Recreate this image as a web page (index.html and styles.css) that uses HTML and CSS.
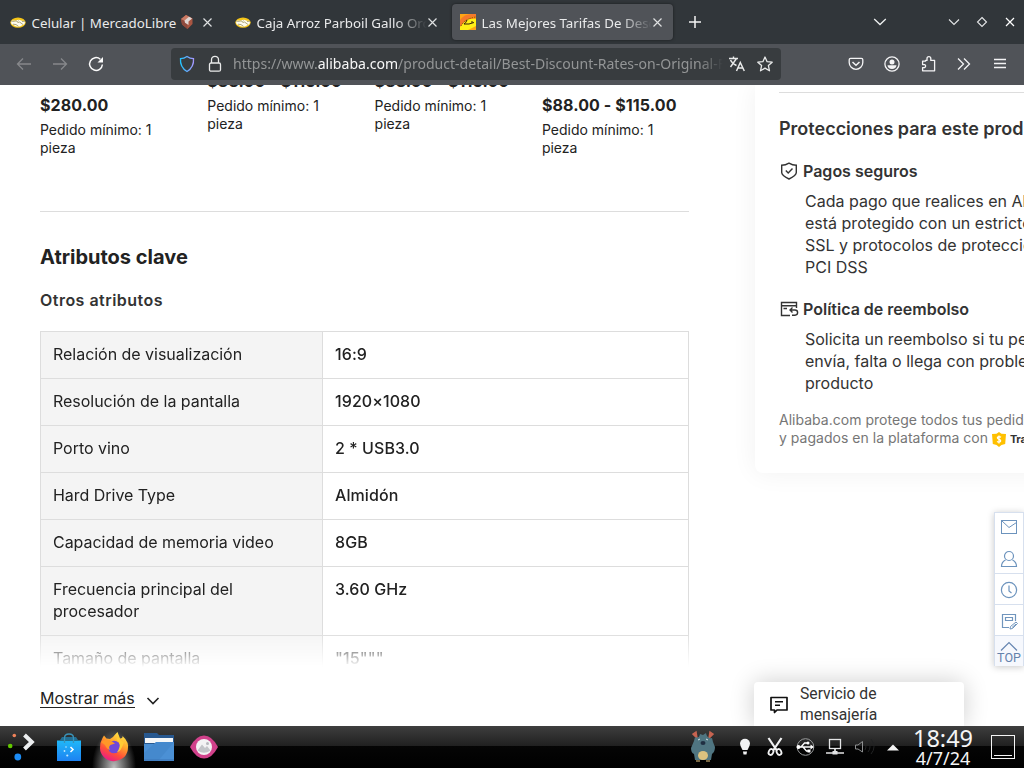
FILE: index.html
```html
<!DOCTYPE html>
<html lang="es">
<head>
<meta charset="utf-8">
<title>Las Mejores Tarifas De Descuento</title>
<link rel="stylesheet" href="styles.css">
</head>
<body>
<svg class="defs" width="0" height="0">
  <defs>
    <g id="handshake">
      <ellipse cx="8" cy="5.6" rx="7.7" ry="5.2" fill="#f5c518"/>
      <path d="M1 4.2C3 3 4 4 6 3.4C8 2.6 10 2.6 11 3.4C13 4 14 3.4 15 4.2L14.6 7C12.500 7.600 11 10 8 9.600C5 10 3.500 7.600 1.400 7Z" fill="#fdfbee"/>
      <path d="M1 4C3.500 5 5 3.600 7 4.200M8.500 3.500C6.500 5.500 8 6 9.500 5L13 7.500M15 4.200L12 4.500M3 7.200L6 7.600L8.500 9.300" fill="none" stroke="#8d8348" stroke-width=".7"/>
    </g>
    <path id="cross" d="M1.500 1.500L9.500 9.500M9.500 1.500L1.500 9.500" fill="none" stroke="#dfe1e2" stroke-width="1.150"/>
  </defs>
</svg>

<div class="tabbar">
  <div class="tab">
    <svg class="favicon" viewBox="0 0 16 11"><use href="#handshake"/></svg>
    <span class="tab-title t1">Celular | MercadoLibre</span>
    <svg class="parcel" viewBox="0 0 12 14"><path d="M0 4L5 0L11.500 3.500V9L6.500 14L1 9.500Z" fill="#a95642"/><path d="M0 4L6 7L6.500 14L1 9.500Z" fill="#8e4a3d"/><path d="M0 4L5 0L11.500 3.500L6 7Z" fill="#c97a64"/><path d="M3.500 5.500L8 1.800L11 3.500L7.500 6.500V10L4 7.800Z" fill="#dfd6d3"/></svg>
    <svg class="close" viewBox="0 0 11 11"><use href="#cross"/></svg>
  </div>
  <div class="tab">
    <svg class="favicon" viewBox="0 0 16 11"><use href="#handshake"/></svg>
    <span class="tab-title fade">Caja Arroz Parboil Gallo Oro 1kg</span>
    <svg class="close" viewBox="0 0 11 11"><use href="#cross"/></svg>
  </div>
  <div class="tab active">
    <svg class="favicon square" viewBox="0 0 16 16"><rect width="16" height="16" fill="#ffa514"/><path d="M0 16V12L7 5L16 5V12L8 16Z" fill="#ffef16"/><path d="M0 6Q4 0 12 0H16V2.500Q6 3 0 13Z" fill="#f5792a"/><path d="M1 12Q5 4.500 16 3" fill="none" stroke="#7a2f15" stroke-width=".9" stroke-dasharray="1.500 .8"/><path d="M7 6Q6 9 4 10H9L14 8.500M11 8H13" fill="none" stroke="#33200c" stroke-width="1"/></svg>
    <span class="tab-title fade">Las Mejores Tarifas De Descuento</span>
    <svg class="close" viewBox="0 0 11 11"><use href="#cross"/></svg>
  </div>
  <svg class="newtab" viewBox="0 0 14 14"><path d="M7 1V13M1 7H13" stroke="#f3f4f4" stroke-width="1.500"/></svg>
  <div class="window-controls">
    <svg class="tabs-menu" viewBox="0 0 14 10"><path d="M1.200 2L7 7.500L12.800 2" fill="none" stroke="#eef0f0" stroke-width="1.300"/></svg>
    <svg viewBox="0 0 12 12"><path d="M1 3.500L6 8.500L11 3.500" fill="none" stroke="#e4e6e7" stroke-width="1.100"/></svg>
    <svg viewBox="0 0 12 12"><path d="M6 1.500L10.500 6L6 10.500L1.500 6Z" fill="none" stroke="#e4e6e7" stroke-width="1.100"/></svg>
    <svg viewBox="0 0 12 12"><path d="M2 2L10 10M10 2L2 10" stroke="#fff" stroke-width="1.200"/></svg>
  </div>
</div>

<div class="toolbar">
  <svg class="nav" viewBox="0 0 16 16"><path d="M15 8H1.500M7 2.500L1.500 8L7 13.500" fill="none" stroke="#86888b" stroke-width="1.300"/></svg>
  <svg class="nav" viewBox="0 0 16 16"><path d="M1 8H14.500M9 2.500L14.500 8L9 13.500" fill="none" stroke="#86888b" stroke-width="1.300"/></svg>
  <svg class="nav" viewBox="0 0 16 16"><path d="M12.300 3.200A6.400 6.400 0 1 0 14.400 8.500" fill="none" stroke="#fbfbfb" stroke-width="1.500"/><path d="M15 1V6.500H9.500Z" fill="#fbfbfb"/></svg>
  <div class="urlbar">
    <svg class="ico" viewBox="0 0 16 18"><defs><linearGradient id="sh" x2="1"><stop stop-color="#20c4ff"/><stop offset="1" stop-color="#a598ff"/></linearGradient></defs><path d="M8 1.500Q11 3.600 14.500 3.700Q15.200 12 8 16.500Q.8 12 1.500 3.700Q5 3.600 8 1.500Z" fill="none" stroke="url(#sh)" stroke-width="1.300"/></svg>
    <svg class="ico" viewBox="0 0 16 18"><path d="M4.500 8V4.800A3.500 3.500 0 0 1 11.500 4.800V8" fill="none" stroke="#e9eaea" stroke-width="1.300"/><rect x="2.500" y="8" width="11" height="8.200" rx="1.500" fill="none" stroke="#e9eaea" stroke-width="1.300"/></svg>
    <span class="url">https://www.<b>alibaba.com</b>/product-detail/Best-Discount-Rates-on-Original-Factory</span>
    <svg class="ico16" viewBox="0 0 16 16"><path d="M0 2.500H9M4.500 .5V2.500M1.500 11L7.500 2.500M1.500 4Q3 7.500 7.500 9.500" fill="none" stroke="#e9eaea" stroke-width="1.400"/><path d="M7.500 15L11.300 6.500L15.300 15M9 12H14" fill="none" stroke="#e9eaea" stroke-width="1.500"/></svg>
    <svg class="ico16" viewBox="0 0 16 16"><path d="M8 1L10.100 5.700L15.200 6.200L11.400 9.600L12.500 14.800L8 12.100L3.500 14.800L4.600 9.600L.8 6.200L5.900 5.700Z" fill="none" stroke="#e9eaea" stroke-width="1.300" stroke-linejoin="round"/></svg>
  </div>
  <div class="actions">
    <svg viewBox="0 0 16 16"><path d="M1.200 3.800Q1.200 2.400 2.600 2.400H13.400Q14.800 2.400 14.800 3.800V6.500A6.800 6.800 0 0 1 1.200 6.500Z" fill="none" stroke="#f4f4f5" stroke-width="1.300"/><path d="M4.500 6L8 9.300L11.500 6" fill="none" stroke="#f4f4f5" stroke-width="1.500"/></svg>
    <svg viewBox="0 0 16 16"><circle cx="8" cy="8" r="7.100" fill="none" stroke="#f4f4f5" stroke-width="1.300"/><circle cx="8" cy="5.900" r="2.500" fill="#f4f4f5"/><path d="M3.500 9.200H12.500Q12 13 8 13Q4 13 3.500 9.200Z" fill="#f4f4f5"/></svg>
    <svg viewBox="0 0 16 16"><path d="M2 5.500V9H4A1.600 1.600 0 0 1 4 12H2V15.200H14V4.800H10.200V3A1.900 1.900 0 0 0 6.400 3V4.800H5V5.500Z" fill="none" stroke="#f4f4f5" stroke-width="1.300" stroke-linejoin="round" transform="translate(.6 -.4)"/></svg>
    <svg viewBox="0 0 16 16"><path d="M2 2.500L7.500 8L2 13.500M8 2.500L13.500 8L8 13.500" fill="none" stroke="#f4f4f5" stroke-width="1.300"/></svg>
    <svg viewBox="0 0 16 16"><path d="M2 3.500H14M2 7.500H14M2 11.500H14" stroke="#f4f4f5" stroke-width="1.300"/></svg>
  </div>
</div>

<main class="page">
  <div class="content">
    <div class="products">
      <div class="product"><div class="price">$280.00</div><div class="moq">Pedido mínimo: 1 pieza</div></div>
      <div class="product raised"><div class="price">$88.00 - $115.00</div><div class="moq">Pedido mínimo: 1 pieza</div></div>
      <div class="product raised"><div class="price">$88.00 - $115.00</div><div class="moq">Pedido mínimo: 1 pieza</div></div>
      <div class="product"><div class="price">$88.00 - $115.00</div><div class="moq">Pedido mínimo: 1 pieza</div></div>
    </div>
    <h2>Atributos clave</h2>
    <h3>Otros atributos</h3>
    <div class="attrs">
      <div class="row"><div class="key">Relación de visualización</div><div class="val">16:9</div></div>
      <div class="row"><div class="key">Resolución de la pantalla</div><div class="val">1920×1080</div></div>
      <div class="row"><div class="key">Porto vino</div><div class="val">2 * USB3.0</div></div>
      <div class="row"><div class="key">Hard Drive Type</div><div class="val">Almidón</div></div>
      <div class="row"><div class="key">Capacidad de memoria video</div><div class="val">8GB</div></div>
      <div class="row"><div class="key">Frecuencia principal del procesador</div><div class="val">3.60 GHz</div></div>
      <div class="row"><div class="key">Tamaño de pantalla</div><div class="val">"15"""</div></div>
    </div>
    <div class="more"><span>Mostrar más</span><svg viewBox="0 0 14 10"><path d="M1.500 2L7 7.500L12.500 2" fill="none" stroke="#222" stroke-width="1.600"/></svg></div>
  </div>

  <aside class="panel">
    <h4>Protecciones para este producto</h4>
    <div class="item-title"><svg viewBox="0 0 20 20"><path d="M10 2.200Q13.500 4.300 17.300 4.300V11.500Q17.300 14.500 10 18Q2.700 14.500 2.700 11.500V4.300Q6.500 4.300 10 2.200Z" fill="none" stroke="#333" stroke-width="1.400"/><path d="M6.800 9.500L9.200 12L13.500 7.500" fill="none" stroke="#333" stroke-width="1.400"/></svg><span>Pagos seguros</span></div>
    <p class="desc">Cada pago que realices en Alibaba<br>está protegido con un estricto cifrado<br>SSL y protocolos de protección<br>PCI DSS</p>
    <div class="item-title second"><svg viewBox="0 0 20 20"><path d="M11 16.500H2.500V3.500H17.500V9M2.500 6.700H17.500M4.500 9.500H8" fill="none" stroke="#333" stroke-width="1.400"/><path d="M13.500 8.500L11 11L13.500 13.500M11 11H16A2.300 2.300 0 0 1 16 16.200H13" fill="none" stroke="#333" stroke-width="1.400"/></svg><span>Política de reembolso</span></div>
    <p class="desc">Solicita un reembolso si tu pedido no se<br>envía, falta o llega con problemas de<br>producto</p>
    <p class="note">Alibaba.com protege todos tus pedidos<br>y pagados en la plataforma con <svg viewBox="0 0 14 15"><path d="M7 0L9.500 1.800L14 2L13.200 12L9.500 13L7 15L4.500 13L.8 12L0 2L4.500 1.800Z" fill="#ffc000"/><path d="M9 5.300Q7 4 5.500 5.200Q5 6.800 7 7.300Q9.200 7.800 8.500 9.500Q7 10.800 5 9.500M7 3.500V11.500" fill="none" stroke="#fff" stroke-width="1.200"/></svg><b>Trade Assurance</b></p>
  </aside>

  <nav class="sidebar">
    <div class="cell double">
      <svg viewBox="0 0 18 18"><rect x="1.500" y="2.500" width="15" height="13" fill="none" stroke="#6c93bd"/><path d="M2 3L9 9.500L16.500 4.500" fill="none" stroke="#6c93bd"/></svg>
      <svg viewBox="0 0 18 18"><circle cx="9" cy="6" r="4.500" fill="none" stroke="#6c93bd" stroke-width="1.200"/><path d="M5.500 10Q1.500 12 1.500 16.500H16.500Q16.500 12 12.500 10" fill="none" stroke="#6c93bd" stroke-width="1.200"/></svg>
    </div>
    <div class="cell"><svg viewBox="0 0 18 18"><circle cx="9" cy="9" r="7.600" fill="none" stroke="#6c93bd" stroke-width="1.200"/><path d="M9 4.500V10L11.500 12" fill="none" stroke="#6c93bd" stroke-width="1.200"/></svg></div>
    <div class="cell"><svg viewBox="0 0 18 18"><path d="M9 15.500H2.500V2.500H15.500V9M5.500 5.500H12.500V8.500H5.500Z" fill="none" stroke="#7095bd" stroke-width="1.200"/><path d="M10 17L10.500 14.500L16 10L17.500 11.500L12.500 16.500ZM12 15.500L16 12" fill="none" stroke="#7095bd"/></svg></div>
    <div class="cell top"><svg viewBox="0 0 18 10"><path d="M1 9.500L9 1.500L17 9.500" fill="none" stroke="#6585b0" stroke-width="1.200"/></svg><span>TOP</span></div>
  </nav>

  <div class="chat">
    <svg viewBox="0 0 20 18"><path d="M2 1.500H18V14H8L5.500 16.500V14H2Z" fill="none" stroke="#111" stroke-width="1.700" stroke-linejoin="round"/><path d="M6 5.800H14M6 9.300H11" stroke="#111" stroke-width="1.400"/></svg>
    <span>Servicio de mensajería</span>
  </div>
</main>

<footer class="taskbar">
  <div class="tasks">
    <svg width="46" height="42" viewBox="0 726 46 42"><path d="M24.500 735L31.800 742L24.500 749" fill="none" stroke="#eceef0" stroke-width="4"/><circle cx="14.300" cy="735.500" r="1.800" fill="#ef825a"/><circle cx="10.200" cy="746" r="2.300" fill="#62c800"/><circle cx="17.800" cy="757" r="3.400" fill="#1c8cf5"/></svg>
    <svg width="46" height="42" viewBox="46 726 46 42"><defs><linearGradient id="bag" y2="1" x2="0"><stop stop-color="#20b8f8"/><stop offset="1" stop-color="#1d82f2"/></linearGradient></defs><path d="M60 740L62 737H76L78 740Z" fill="#236f94"/><path d="M57 740.500H81V761H57Z" fill="url(#bag)"/><path d="M64.500 743V738Q64.500 734 69 734Q73.500 734 73.500 738V743" fill="none" stroke="#3a93b8" stroke-width="1.300"/><path d="M70.500 747L73 749.500L70.500 752" fill="none" stroke="#fff" stroke-width="1.500"/><circle cx="66" cy="747" r=".8" fill="#bfe7ff"/><circle cx="64.500" cy="751" r=".9" fill="#bfe7ff"/><circle cx="67.300" cy="755.500" r="1.100" fill="#bfe7ff"/></svg>
    <svg class="focus" width="44" height="42" viewBox="92 726 44 42"><defs><linearGradient id="fx" x1=".8" y1="0" x2=".3" y2="1"><stop stop-color="#fff14a"/><stop offset=".4" stop-color="#ffa32b"/><stop offset=".7" stop-color="#ff5038"/><stop offset="1" stop-color="#e9188b"/></linearGradient></defs><path d="M102.500 738L104 735.500L106.500 738.500L110 739L113 737Q114.500 735 117.500 732L120 738.500Q123 738 122.500 736Q129.500 742 127.800 750A14 13.500 0 0 1 100 748Q100 742 102.500 738Z" fill="url(#fx)"/><circle cx="114" cy="747" r="6.300" fill="#7148d8"/><path d="M101 742L105 740L110 740Q113 742 115 743.500L110.500 745Q108 747 110 750Q106.500 749 105 745Z" fill="#ff9628"/><path d="M118 735Q120 741 124 742Q121 752 117 752Q121 747 119 742Q115 740 118 735Z" fill="#ffcc35"/></svg>
    <svg width="46" height="42" viewBox="136 726 46 42"><path d="M144 733H157L159 735H174V750H144Z" fill="#28588f"/><path d="M145 738H173V743H145Z" fill="#f6f7f8"/><path d="M144 744H154L156 742H174V761H144Z" fill="#4b90d5"/><path d="M144 753L156 742H174L158 761H144Z" fill="#3f80c4" opacity=".45"/><path d="M144 760H174" stroke="#3a73b5"/></svg>
    <svg width="46" height="42" viewBox="182 726 46 42"><path d="M190 747Q196 735.500 204 735.500Q212 735.500 218 747Q212 758.500 204 758.500Q196 758.500 190 747Z" fill="#d1418b"/><circle cx="204" cy="747" r="8" fill="#f3f3f4"/><path d="M197.500 750.500L202 744.500L205 748L207 746L210.500 750.500Q204 755 197.500 750.500Z" fill="#c3c5c9"/><circle cx="207.500" cy="743.500" r="1.500" fill="#b6b8bd"/></svg>
  </div>
  <div class="tray">
    <svg class="monster" width="46" height="42" viewBox="684 726 46 42"><path d="M693 734L696 732L697 738ZM713 734L710 732L709 738Z" fill="#c76451" stroke="#c76451" stroke-width="1.500"/><path d="M694 741L695 737Q699 739 700 734L703 735L706 733Q707 739 712 738L713 742L715 747Q715 752 712 754L711 760H695L694 754Q691 753 691 748Z" fill="#4f7581"/><path d="M698 740L700 739M706 739L708 740" stroke="#d8e5e8"/><ellipse cx="703" cy="743" rx="2.500" ry="2" fill="#202f42"/><ellipse cx="703" cy="755.500" rx="5" ry="4.500" fill="#dbc27f"/><path d="M696 761H700M706 761H710" stroke="#9f8757" stroke-width="1.500"/></svg>
    <svg width="30" height="42" viewBox="730 726 30 42"><path d="M742.500 750Q740 746 740 743.500A5 4.700 0 0 1 750 743.500Q750 746 747.500 750Z" fill="#f1f2f3"/><path d="M743 751.500H747L746.500 754.500H743.500Z" fill="#f1f2f3"/></svg>
    <svg width="30" height="42" viewBox="760 726 30 42"><path d="M768.500 738L776.500 750M781.500 738L773.500 750" stroke="#f1f2f3" stroke-width="2.200"/><ellipse cx="771" cy="752" rx="2.300" ry="3" fill="none" stroke="#f1f2f3" stroke-width="1.800" transform="rotate(25 771 752)"/><ellipse cx="779" cy="752" rx="2.300" ry="3" fill="none" stroke="#f1f2f3" stroke-width="1.800" transform="rotate(-25 779 752)"/></svg>
    <svg width="30" height="42" viewBox="790 726 30 42"><circle cx="805.500" cy="747" r="8.300" fill="none" stroke="#9b9d9e"/><path d="M798 747H811M801 747L804.500 743H807M803 747L806.500 751H808.500" fill="none" stroke="#fff" stroke-width="1.300"/><circle cx="798.500" cy="747" r="2" fill="#fff"/><circle cx="808" cy="743" r="1.500" fill="#fff"/><path d="M807.500 749.500H810.500V752.500H807.500ZM810.500 744.500L814 747L810.500 749.500Z" fill="#fff"/></svg>
    <svg width="30" height="42" viewBox="820 726 30 42"><rect x="829.500" y="739.500" width="11" height="9" fill="none" stroke="#e3e4e5" stroke-width="1.300"/><path d="M835 748.500V753M826 753H844" stroke="#e3e4e5" stroke-width="1.700"/><rect x="832.500" y="751" width="5" height="3.500" fill="#e3e4e5"/></svg>
    <svg width="30" height="42" viewBox="850 726 30 42"><path d="M855.500 745H858L862.500 741.500V752L858 749H855.500Z" fill="none" stroke="#8d8f90"/><path d="M865 744Q867 747 865 750M868 741.500Q872 747 868 752M871 739Q877 747 871 754" fill="none" stroke="#222324"/></svg>
    <svg width="26" height="42" viewBox="880 726 26 42"><path d="M887 750.500L893 744.500L899 750.500Z" fill="#f5f5f5"/></svg>
    <div class="clock"><span class="time">18:49</span><span class="date">4/7/24</span></div>
    <svg width="44" height="42" viewBox="980 726 44 42"><rect x="991.500" y="735.500" width="23" height="23" fill="none" stroke="#f5f5f5"/><path d="M994 755.500H1012" stroke="#f5f5f5"/></svg>
  </div>
</footer>
</body>
</html>
```

FILE: styles.css
```css
* { box-sizing: border-box; }
body { margin: 0; width: 1024px; height: 768px; overflow: hidden; display: flex; flex-direction: column; background: #fff; font-family: Inter, "Liberation Sans", sans-serif; color: #222; }
svg { display: block; flex: none; }
.defs { position: absolute; }

.tabbar { height: 44px; flex: none; display: flex; align-items: center; background: #31363a; font: 13.330px "Noto Sans", sans-serif; color: #e9eaeb; }
.tab { width: 221px; height: 36px; margin: 0 2px; padding: 0 10.500px 0 8px; display: flex; align-items: center; border-radius: 4px; }
.tab.active { background: #505358; box-shadow: 0 0 3px rgba(0,0,0,.5); }
.favicon { width: 16px; height: 11px; margin-right: 5.500px; }
.favicon.square { height: 16px; }
.tab-title { flex: 1; overflow: hidden; white-space: nowrap; line-height: 20px; padding-top: 1px; }
.tab-title.t1 { flex: none; width: 149px; }
.tab-title.fade { -webkit-mask-image: linear-gradient(to right, #000 calc(100% - 32px), transparent); mask-image: linear-gradient(to right, #000 calc(100% - 32px), transparent); }
.parcel { width: 12px; height: 14px; margin-right: auto; }
.close { width: 11px; height: 11px; }
.newtab { width: 14px; height: 14px; margin-left: 13px; }
.window-controls { margin-left: auto; padding-right: 8px; display: flex; align-items: center; gap: 16px; }
.window-controls svg { width: 12px; height: 12px; }
.window-controls .tabs-menu { width: 14px; height: 10px; margin-right: 45px; }

.toolbar { height: 41px; flex: none; display: flex; align-items: center; background: #505358; padding: 0 0 1px 16px; }
.nav { width: 16px; height: 16px; margin-right: 20px; }
.urlbar { width: 610px; height: 32px; margin-left: 47px; padding: 0 8px; border-radius: 4px; background: #383c3f; display: flex; align-items: center; font: 14.050px "Noto Sans", sans-serif; color: #939596; }
.ico { width: 16px; height: 18px; margin-right: 12px; }
.url { flex: 1; margin: 0 6px 0 -2px; padding-bottom: 1px; overflow: hidden; white-space: nowrap; -webkit-mask-image: linear-gradient(to right, #000 calc(100% - 24px), transparent); mask-image: linear-gradient(to right, #000 calc(100% - 24px), transparent); }
.url b { font-weight: 400; color: #f7f7f7; }
.ico16 { width: 16px; height: 16px; }
.ico16 + .ico16 { margin-left: 12px; }
.actions { margin-left: auto; padding-right: 16px; display: flex; gap: 20px; }
.actions svg { width: 16px; height: 16px; }

.page { position: relative; flex: none; height: 641px; overflow: hidden; display: flex; align-items: flex-start; }
.content { width: 649px; margin-left: 40px; flex: none; }
.products { height: 127px; padding-top: 9px; display: grid; grid-template-columns: repeat(4, 167.300px); border-bottom: 1px solid #ddd; }
.product.raised { margin-top: -24px; }
.price { font-size: 16px; font-weight: 700; line-height: 22px; letter-spacing: .1px; white-space: nowrap; }
.moq { width: 134px; margin-top: 5px; font-size: 14px; line-height: 18px; }
h2 { margin: 31px 0 0; font-size: 20px; line-height: 28px; font-weight: 700; }
h3 { margin: 18px 0 20px; font-size: 16px; line-height: 22px; font-weight: 600; letter-spacing: .48px; color: #333; }
.attrs { height: 337px; overflow: hidden; border-top: 1px solid #ddd; font-size: 16px; line-height: 22px; -webkit-mask-image: linear-gradient(#000 301px, transparent 336px); mask-image: linear-gradient(#000 301px, transparent 336px); }
.row { display: flex; border: 1px solid #ddd; border-top: 0; }
.key { width: 282px; flex: none; padding: 11px 12px 13px; background: #f4f4f4; border-right: 1px solid #ddd; letter-spacing: -.03px; }
.val { padding: 11px 12px 13px; font-weight: 500; letter-spacing: .08px; }
.more { margin-top: 20px; display: flex; align-items: center; gap: 11px; font-size: 16px; line-height: 18px; }
.more span { padding-top: 1px; border-bottom: 1px solid #222; }
.more svg { width: 14px; height: 10px; margin-top: 5px; }

.panel { width: 400px; height: 388px; margin-left: 66px; padding: 7px 0 0 24px; flex: none; border-radius: 0 0 8px 8px; box-shadow: 0 0 26px rgba(0,0,0,.06); color: #333; white-space: nowrap; }
h4 { margin: 0; padding-top: 23px; border-top: 1px solid #ddd; font-size: 18px; line-height: 26px; font-weight: 600; }
.item-title { margin-top: 17px; display: flex; align-items: center; gap: 4px; font-size: 16px; line-height: 24px; font-weight: 600; }
.item-title svg { width: 20px; height: 20px; }
.item-title.second { margin-top: 19px; }
.desc { margin: 7px 0 0 26px; font-size: 16px; line-height: 22px; }
.note { margin: 17px 0 0; font-size: 14px; line-height: 18px; letter-spacing: .02px; color: #767676; }
.note svg { display: inline-block; width: 14px; height: 15px; vertical-align: -4px; }
.note b { margin-left: 4px; font-size: 11px; font-weight: 700; letter-spacing: -.3px; color: #333; }

/* Floating shortcuts and chat launcher sit over the page */
.sidebar { position: absolute; right: 0; top: 427px; width: 30px; border: 1px solid #d7e0ee; border-bottom: 0; background: #fff; box-shadow: 0 1px 7px rgba(0,0,0,.22); }
.cell { height: 31px; display: flex; align-items: center; justify-content: center; border-bottom: 1px solid #d7e0ee; }
.cell svg { width: 18px; height: 18px; margin-top: 1px; }
.cell.double { height: 61px; flex-direction: column; gap: 13px; padding-bottom: 1px; }
.cell.top { height: 30px; flex-direction: column; justify-content: flex-start; padding-top: 4px; border: 0; background: #f6f8fd; }
.cell.top svg { height: 10px; }
.cell span { font: 12.500px/13px Roboto, sans-serif; color: #6482ac; }
.chat { position: absolute; left: 754px; top: 597px; width: 210px; height: 44px; padding: 0 15px; display: flex; align-items: center; border-radius: 4px 4px 0 0; background: #fff; box-shadow: 0 0 24px rgba(0,0,0,.2); font: 15.700px/21px Roboto, sans-serif; color: #333; }
.chat svg { width: 20px; height: 18px; margin: 2px 11px 0 0; }
.chat span { width: 100px; }

.taskbar { height: 42px; flex: none; display: flex; justify-content: space-between; background: linear-gradient(#3e3e3e, #202020 20px, #050505 20px, #000); }
.tasks, .tray { display: flex; }
.focus { background: radial-gradient(ellipse 22px 38px at 50% 100%, rgba(255,255,255,.75), transparent); }
.monster { filter: blur(.5px); }
.clock { width: 74px; display: flex; flex-direction: column; align-items: center; font-family: "Noto Sans", sans-serif; color: #f5f5f5; }
.time { font-size: 23.500px; line-height: 24px; }
.date { font-size: 18px; line-height: 17px; }
```
